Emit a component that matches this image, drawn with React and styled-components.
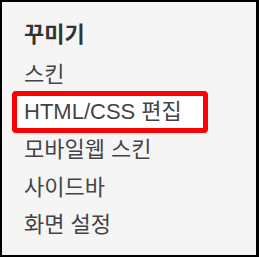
import React from "react";
import styled, { createGlobalStyle } from "styled-components";

const Global = createGlobalStyle`
  html, body { margin: 0; padding: 0; background: #f5f5f5; }
  body { font-family: "Liberation Sans", "Noto Sans CJK KR", sans-serif; }
`;

const Panel = styled.nav`
  box-sizing: border-box;
  width: 259px;
  height: 257px;
  border: 2px solid #000;
  border-right-width: 3px;
  background: #f5f5f5;
  padding: 13px 0 0 22px;
  display: flex;
  flex-direction: column;
`;

const Heading = styled.div`
  height: 41px;
  line-height: 40px;
  font-size: 22px;
  font-weight: 700;
  color: #333;
`;

const Item = styled.div`
  box-sizing: border-box;
  height: 37.5px;
  line-height: 37.5px;
  font-size: 22px;
  color: #444;
  white-space: nowrap;
  ${(p) =>
    p.$active &&
    `
    height: 42px;
    line-height: 32px;
    margin: -2.25px 0 -2.25px -12px;
    width: 196px;
    padding-left: 7px;
    border: 5px solid #ff0000;
    border-radius: 4px;
    background: #fff;
  `}
`;

const items = ["스킨", "HTML/CSS 편집", "모바일웹 스킨", "사이드바", "화면 설정"];

export default function App() {
  return (
    <>
      <Global />
      <Panel>
        <Heading>꾸미기</Heading>
        {items.map((t) => (
          <Item key={t} $active={t === "HTML/CSS 편집"}>
            {t}
          </Item>
        ))}
      </Panel>
    </>
  );
}
